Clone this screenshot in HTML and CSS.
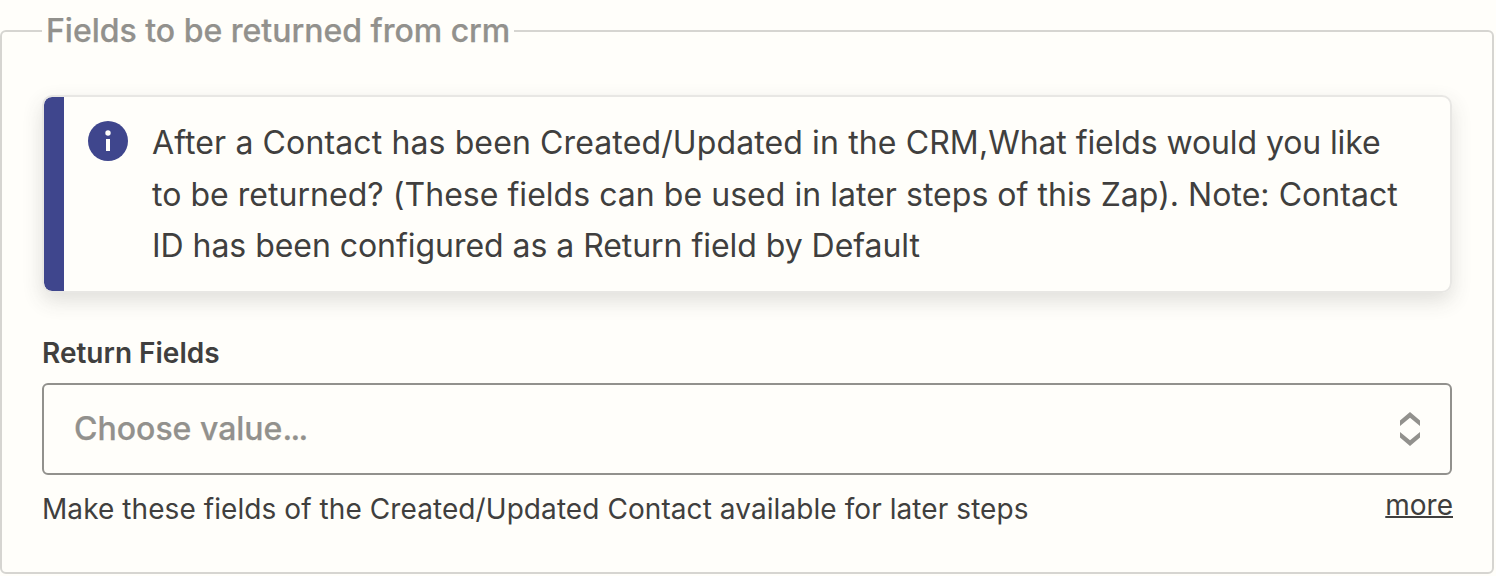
FILE: index.html
```html
<!DOCTYPE html>
<html lang="en">
<head>
<meta charset="utf-8">
<title>Return fields</title>
<link rel="stylesheet" href="styles.css">
</head>
<body>
<fieldset class="group">
  <legend class="group-title">Fields to be returned from crm</legend>
  <div class="notice">
    <svg class="notice-icon" viewBox="0 0 40 40" aria-hidden="true"><circle cx="20" cy="20" r="20" fill="#3f468d"/><circle cx="20" cy="12" r="2.7" fill="#fffefa"/><path d="M18 18h4v12h-4z" fill="#fffefa"/></svg>
    <p class="notice-text"><span class="wide">After a Contact has been Created/Updated in the CRM,</span><span class="tighter">What fields would you like</span><br><span class="normal">to be returned? (These fields can be used in later steps of this Zap). Note: Contact</span><br><span class="tight">ID has been configured as a Return field by Default</span></p>
  </div>
  <div class="label">Return Fields</div>
  <div class="select">
    <span class="placeholder">Choose value<span class="dots">...</span></span>
    <svg class="chevrons" viewBox="0 0 20 34" aria-hidden="true"><path d="M10 0L20 8.500V14L10 5.700L0 14V8.500ZM10 34L20 25.500V20L10 28.300L0 20V25.500Z" fill="#92918d"/></svg>
  </div>
  <div class="help">
    <span class="hint">Make these fields of the Created/Updated Contact available for later steps</span>
    <a class="more">more</a>
  </div>
</fieldset>
</body>
</html>
```
FILE: styles.css
```css
* { box-sizing: border-box; }
body { margin: 0; padding-top: 10px; background: #fffefa; color: #403f3e; font-family: Inter, sans-serif; height: 576px; overflow: hidden; }
.group { margin: 0; width: 1494px; height: 564px; border: 2px solid #d6d5d1; border-radius: 6px; padding: 43px 40px 0; min-width: 0; }
.group-title { padding: 0 4px; font-size: 32px; line-height: 42px; font-weight: 500; letter-spacing: -0.01px; color: #92918d; -webkit-text-stroke: 0.25px #92918d; white-space: nowrap; }
.notice { display: flex; width: 1410px; height: 198px; border: 2px solid #e8e7e4; border-radius: 10px; padding: 20px 22px 0 44px; gap: 24px; background: linear-gradient(to right, #3f468d 20px, #fffefa 20px) padding-box; box-shadow: 0 8px 20px rgba(64,63,62,.16); }
.notice-icon { width: 40px; height: 40px; flex: none; margin-top: 4px; }
.notice-text { margin: 0; font-size: 32px; line-height: 51.500px; white-space: nowrap; }
.wide { letter-spacing: 0.12px; }
.normal { letter-spacing: 0.035px; }
.tight { letter-spacing: -0.045px; }
.tighter { letter-spacing: -0.1px; }
.label { margin-top: 42px; font-size: 28px; line-height: 36px; font-weight: 600; }
.select { margin-top: 12px; display: flex; align-items: center; justify-content: space-between; width: 1410px; height: 92px; border: 2px solid #92918d; border-radius: 6px; padding: 0 30px 2px; }
.placeholder { font-size: 32px; font-weight: 500; color: #92918d; -webkit-text-stroke: 0.25px #92918d; }
.dots { letter-spacing: -1.700px; }
.chevrons { width: 20px; height: 34px; margin-top: 1px; }
.help { display: flex; justify-content: space-between; margin-top: 13px; width: 1411px; font-size: 28px; line-height: 42px; white-space: nowrap; }
.hint { letter-spacing: 0.075px; }
.more { line-height: 35px; text-decoration: underline; text-decoration-thickness: 2px; }
```
